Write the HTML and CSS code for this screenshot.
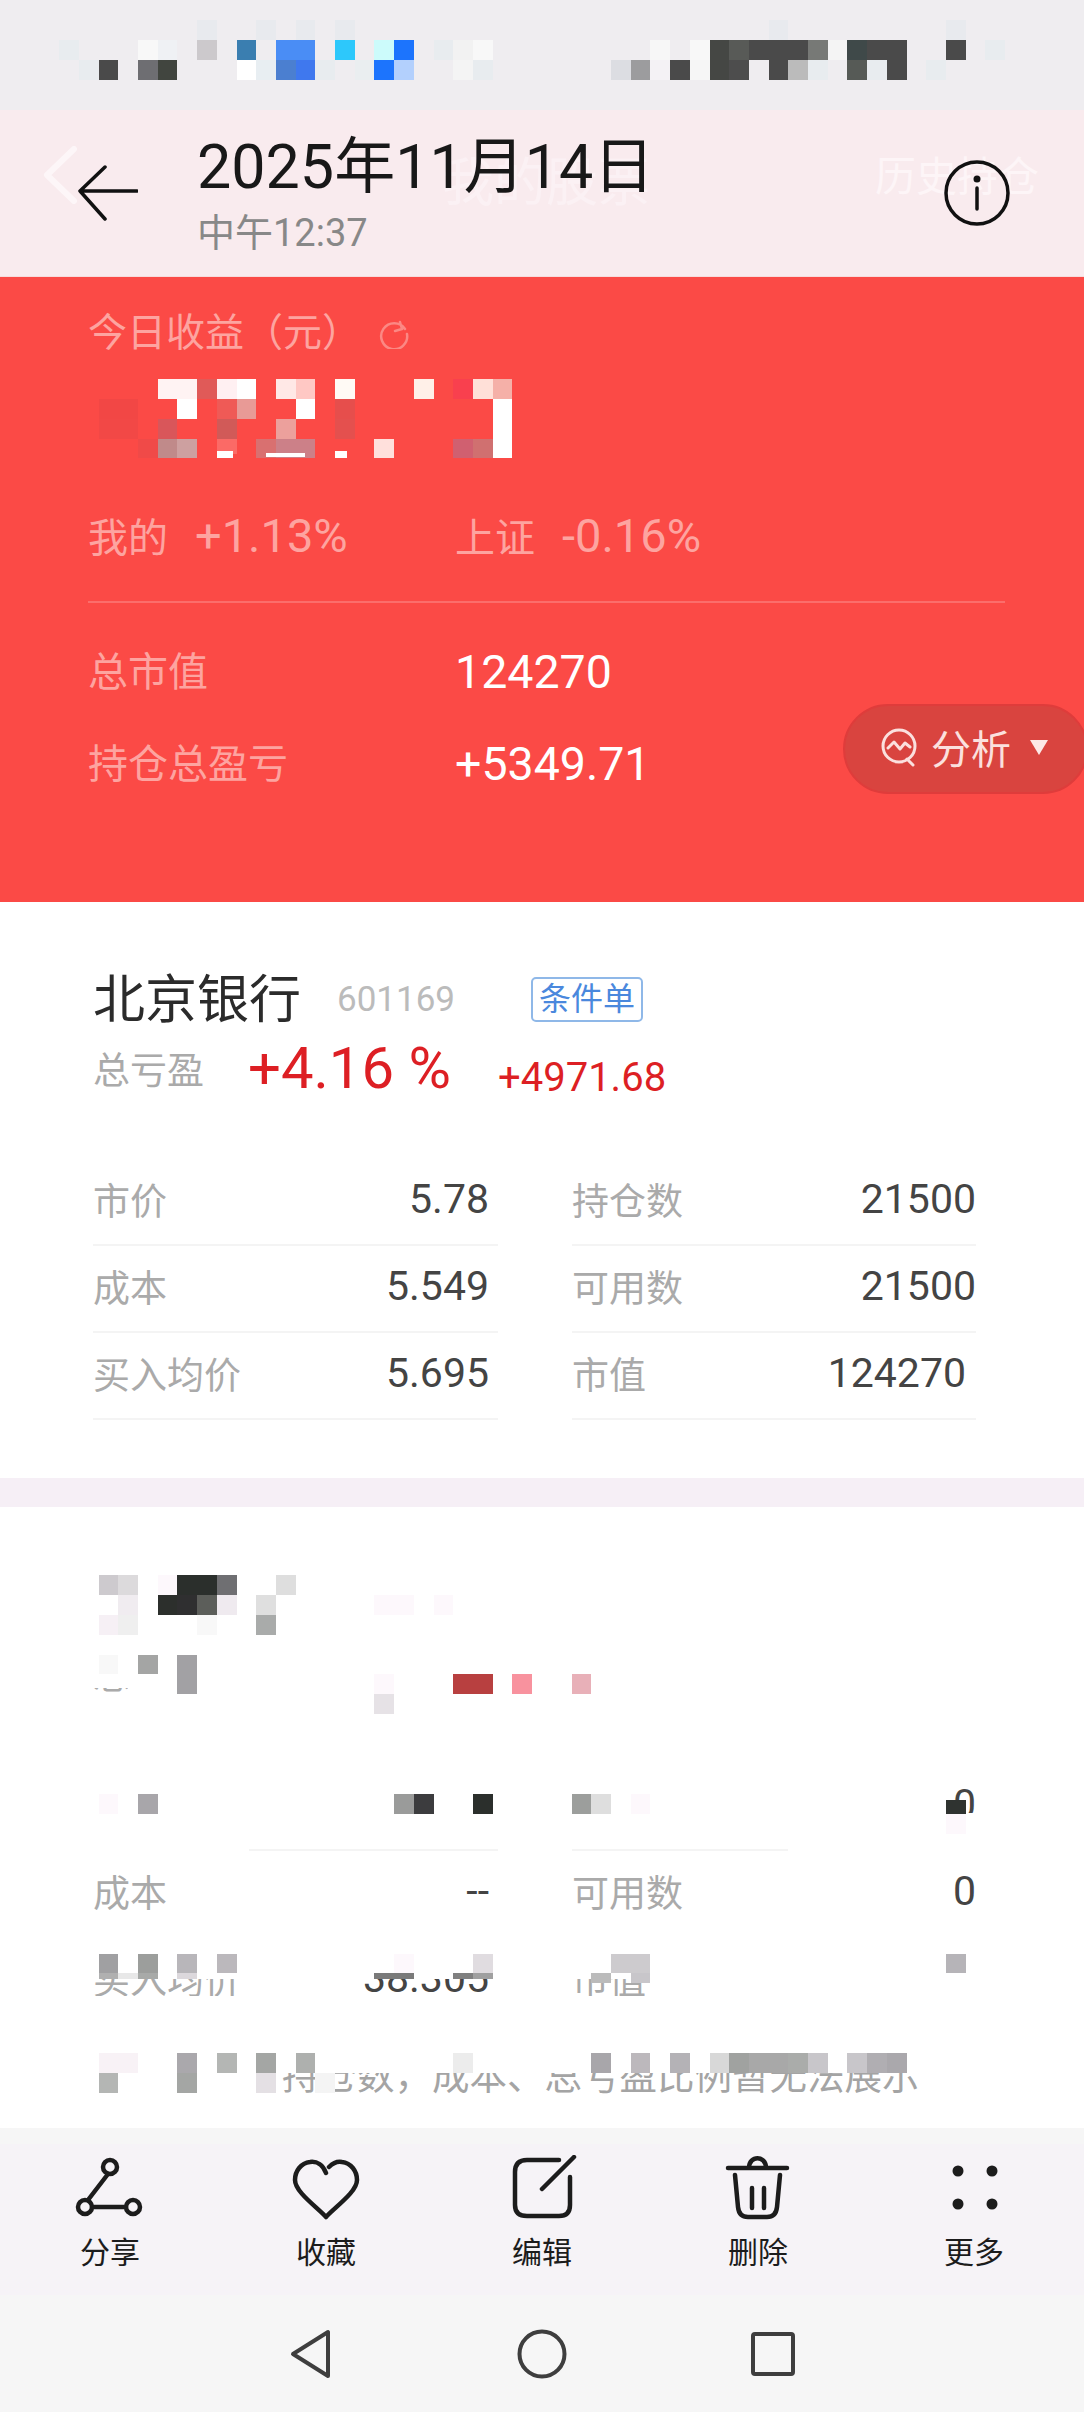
FILE: index.html
```html
<!DOCTYPE html>
<html lang="zh-CN">
<head>
    <meta charset="UTF-8">
    <meta name="viewport" content="width=device-width, initial-scale=1.0">
    <title>持仓详情</title>
    <link rel="stylesheet" href="styles.css">
</head>
<body>
    <div class="page">
        <div class="status-bar"></div>

        <header class="top-bar">
            <div class="ghost-bar">
                <svg class="ghost-back" viewBox="0 0 36 58"><path d="M32 3 L5 29 L32 55"/></svg>
                <span class="ghost-title">我的股票</span>
                <span class="ghost-link">历史持仓</span>
            </div>
            <svg class="back-arrow" viewBox="0 0 60 56"><path d="M27 2 L2 26 L27 54 M2 26 H59"/></svg>
            <div class="title-block">
                <h1>2025年11月14日</h1>
                <p>中午12:37</p>
            </div>
            <svg class="info-icon" viewBox="0 0 68 68">
                <circle cx="34" cy="34" r="31"/>
                <circle class="dot" cx="34" cy="20" r="3.5"/>
                <path d="M34 29 V50"/>
            </svg>
        </header>

        <section class="summary">
            <div class="today">
                今日收益（元）
                <svg class="refresh" viewBox="0 0 32 32"><path d="M27 12 A13 13 0 1 0 29 17 M22 5 L24 12 L17 14"/></svg>
            </div>
            <div class="compare">
                <span class="compare-item"><span class="compare-name">我的</span>+1.13%</span>
                <span class="compare-item"><span class="compare-name">上证</span>-0.16%</span>
            </div>
            <div class="summary-line"></div>
            <div class="summary-row"><span class="summary-label">总市值</span><span class="summary-value">124270</span></div>
            <div class="summary-row second"><span class="summary-label">持仓总盈亏</span><span class="summary-value">+5349.71</span></div>
            <div class="analyse">
                <svg class="analyse-icon" viewBox="0 0 42 40">
                    <circle cx="20" cy="19" r="16"/>
                    <path d="M9 21 L15 15 L21 22 L26 16 L31 20 M28 32 L34 38"/>
                </svg>
                分析
                <span class="caret"></span>
            </div>
        </section>

        <section class="stock">
            <div class="stock-head">
                <span class="stock-name">北京银行</span>
                <span class="stock-code">601169</span>
                <span class="stock-tag">条件单</span>
            </div>
            <div class="stock-profit">
                <span class="profit-label">总亏盈</span>
                <span class="profit-rate">+4.16 %</span>
                <span class="profit-sum">+4971.68</span>
            </div>
            <div class="stock-grid">
                <div class="cell"><span>市价</span><b>5.78</b></div>
                <div class="cell"><span>持仓数</span><b>21500</b></div>
                <div class="cell"><span>成本</span><b>5.549</b></div>
                <div class="cell"><span>可用数</span><b>21500</b></div>
                <div class="cell"><span>买入均价</span><b>5.695</b></div>
                <div class="cell"><span>市值</span><b class="nudge">124270</b></div>
            </div>
        </section>

        <div class="strip"></div>

        <section class="stock second-stock">
            <div class="stock-head"></div>
            <div class="stock-profit">
                <span class="profit-label">总亏盈</span>
            </div>
            <div class="stock-grid">
                <div class="cell"><span>市价</span><b>--</b></div>
                <div class="cell"><span>持仓数</span><b>0</b></div>
                <div class="cell"><span>成本</span><b>--</b></div>
                <div class="cell"><span>可用数</span><b>0</b></div>
                <div class="cell"><span>买入均价</span><b>38.305</b></div>
                <div class="cell"><span>市值</span><b></b></div>
            </div>
            <p class="stock-note">持仓数，成本、总亏盈比例暂无法展示</p>
        </section>

        <div class="tool-gap"></div>

        <nav class="toolbar">
            <div class="tool">
                <svg viewBox="0 0 70 65">
                    <circle cx="35" cy="12" r="7"/><circle cx="10" cy="52" r="7"/><circle cx="58" cy="52" r="7"/>
                    <path d="M33 19 L13 45 M17 52 H51"/>
                </svg>
                <span>分享</span>
            </div>
            <div class="tool">
                <svg viewBox="0 0 70 65"><path d="M35 18 C32 10 26 6 19 7 C10 8 4 16 4 25 C4 37 26 52 35 62 C44 52 66 37 66 25 C66 16 60 8 51 7 C46 6 42 8 38 12"/></svg>
                <span>收藏</span>
            </div>
            <div class="tool">
                <svg viewBox="0 0 70 65"><path d="M52 5 H20 Q8 5 8 17 V50 Q8 61 20 61 H52 Q63 61 63 50 V22 M67 2 L35 34"/></svg>
                <span>编辑</span>
            </div>
            <div class="tool">
                <svg viewBox="0 0 70 65"><path d="M5 13 H64 M26 13 C26 0 43 0 43 13 M12 20 L15 52 Q16 62 25 62 H44 Q53 62 54 52 L57 20 M29 33 V53 M41 33 V53"/></svg>
                <span>删除</span>
            </div>
            <div class="tool">
                <svg viewBox="0 0 70 65">
                    <circle class="dot" cx="19" cy="16" r="5.5"/><circle class="dot" cx="53" cy="16" r="5.5"/>
                    <circle class="dot" cx="19" cy="49" r="5.5"/><circle class="dot" cx="53" cy="49" r="5.5"/>
                </svg>
                <span>更多</span>
            </div>
        </nav>

        <div class="nav-bar">
            <svg viewBox="0 0 44 50"><path d="M39 3 V47 L4 25 Z"/></svg>
            <svg viewBox="0 0 50 50"><circle cx="25" cy="25" r="22.5"/></svg>
            <svg viewBox="0 0 46 46"><rect x="3" y="3" width="40" height="40" rx="2"/></svg>
        </div>

        <!-- masked areas of the screenshot, the white parts first, then the pixel blocks -->
        <svg class="censor" viewBox="0 0 1084 2412" preserveAspectRatio="none">
            <g fill="#fff">
                <rect x="0" y="1530" width="1084" height="158"/>
                <rect x="128" y="1688" width="956" height="6"/>
                <rect x="0" y="1694" width="1084" height="92"/>
                <rect x="0" y="1786" width="945" height="63"/>
                <rect x="985" y="1786" width="99" height="68"/>
                <rect x="945" y="1813" width="40" height="41"/>
                <rect x="0" y="1849" width="249" height="4"/>
                <rect x="788" y="1849" width="157" height="4"/>
                <rect x="0" y="1910" width="1084" height="69"/>
                <rect x="0" y="1996" width="1084" height="77"/>
                <rect x="0" y="2073" width="249" height="21"/>
            </g>
            <g transform="scale(19.709 19.934)">
                <!-- status bar -->
                <rect x="10" y="1" width="1" height="1" fill="#e8eaee"/><rect x="13" y="1" width="1" height="1" fill="#e8eaee"/>
                <rect x="15" y="1" width="1" height="1" fill="#e8eaee"/><rect x="17" y="1" width="1" height="1" fill="#e8eaee"/>
                <rect x="39" y="1" width="1" height="1" fill="#e8eaee"/><rect x="48" y="1" width="1" height="1" fill="#e8eaee"/>

                <rect x="3" y="2" width="1" height="1" fill="#e8ecef"/><rect x="7" y="2" width="1" height="1" fill="#f8f8f8"/>
                <rect x="8" y="2" width="1" height="1" fill="#eff1f4"/><rect x="10" y="2" width="1" height="1" fill="#ccc9cc"/>
                <rect x="12" y="2" width="1" height="1" fill="#3a7eb0"/><rect x="14" y="2" width="2" height="1" fill="#4a8df5"/>
                <rect x="17" y="2" width="1" height="1" fill="#2dc8fb"/><rect x="19" y="2" width="1" height="1" fill="#ccfbfb"/>
                <rect x="20" y="2" width="1" height="1" fill="#1c74fd"/><rect x="22" y="2" width="1" height="1" fill="#e8ecef"/>
                <rect x="23" y="2" width="1" height="1" fill="#f2f2f2"/><rect x="24" y="2" width="1" height="1" fill="#f8f8f8"/>
                <rect x="33" y="2" width="1" height="1" fill="#f7f7f7"/><rect x="35" y="2" width="1" height="1" fill="#f8f8f8"/>
                <rect x="36" y="2" width="1" height="1" fill="#454744"/><rect x="37" y="2" width="1" height="1" fill="#585a57"/>
                <rect x="38" y="2" width="3" height="1" fill="#4a4a4a"/><rect x="41" y="2" width="1" height="1" fill="#777976"/>
                <rect x="42" y="2" width="1" height="1" fill="#f4f4f4"/><rect x="43" y="2" width="1" height="1" fill="#3f4949"/>
                <rect x="44" y="2" width="2" height="1" fill="#4a4a4a"/><rect x="48" y="2" width="1" height="1" fill="#4a4a4a"/>
                <rect x="50" y="2" width="1" height="1" fill="#e8ecef"/>

                <rect x="4" y="3" width="1" height="1" fill="#e8ecef"/><rect x="5" y="3" width="1" height="1" fill="#4a4a4a"/>
                <rect x="7" y="3" width="1" height="1" fill="#6e6e72"/><rect x="8" y="3" width="1" height="1" fill="#41453f"/>
                <rect x="12" y="3" width="1" height="1" fill="#fff"/><rect x="13" y="3" width="1" height="1" fill="#e8eef2"/>
                <rect x="14" y="3" width="1" height="1" fill="#4b7fd0"/><rect x="15" y="3" width="1" height="1" fill="#3f78ee"/>
                <rect x="16" y="3" width="1" height="1" fill="#e8ecef"/><rect x="18" y="3" width="1" height="1" fill="#eaeef0"/>
                <rect x="19" y="3" width="1" height="1" fill="#1c74fd"/><rect x="20" y="3" width="1" height="1" fill="#b3d0fd"/>
                <rect x="23" y="3" width="1" height="1" fill="#f4f4f4"/><rect x="24" y="3" width="1" height="1" fill="#e8ecef"/>
                <rect x="31" y="3" width="1" height="1" fill="#dcdde2"/><rect x="32" y="3" width="1" height="1" fill="#9c9c9e"/>
                <rect x="33" y="3" width="1" height="1" fill="#f4f2f5"/><rect x="34" y="3" width="1" height="1" fill="#4a4a4a"/>
                <rect x="35" y="3" width="1" height="1" fill="#f6f6f6"/><rect x="36" y="3" width="1" height="1" fill="#454744"/>
                <rect x="37" y="3" width="1" height="1" fill="#4d4d4d"/><rect x="39" y="3" width="1" height="1" fill="#4a4a4a"/>
                <rect x="40" y="3" width="1" height="1" fill="#bbbbbb"/><rect x="41" y="3" width="1" height="1" fill="#e8ecef"/>
                <rect x="43" y="3" width="1" height="1" fill="#565a56"/><rect x="44" y="3" width="1" height="1" fill="#e8ecef"/>
                <rect x="45" y="3" width="1" height="1" fill="#4a4a4a"/><rect x="47" y="3" width="1" height="1" fill="#e8ecef"/>

                <!-- today's profit number -->
                <rect x="8" y="19" width="2" height="1" fill="#fff3f3"/><rect x="10" y="19" width="1" height="1" fill="#e05a58"/>
                <rect x="11" y="19" width="1" height="1" fill="#fff0f2"/><rect x="12" y="19" width="1" height="1" fill="#fff"/>
                <rect x="14" y="19" width="1" height="1" fill="#ffe8e6"/><rect x="15" y="19" width="1" height="1" fill="#ffc8c4"/>
                <rect x="17" y="19" width="1" height="1" fill="#fffaf5"/><rect x="21" y="19" width="1" height="1" fill="#fff0e8"/>
                <rect x="23" y="19" width="1" height="1" fill="#f9404e"/><rect x="24" y="19" width="1" height="1" fill="#ffe0d8"/>
                <rect x="25" y="19" width="1" height="1" fill="#f5b0a8"/>

                <rect x="5" y="20" width="2" height="1" fill="#f24745"/><rect x="9" y="20" width="1" height="1" fill="#fff"/>
                <rect x="11" y="20" width="1" height="1" fill="#ef5a56"/><rect x="12" y="20" width="1" height="1" fill="#e89a96"/>
                <rect x="15" y="20" width="1" height="1" fill="#fff"/><rect x="17" y="20" width="1" height="1" fill="#e64e4c"/>
                <rect x="25" y="20" width="1" height="1" fill="#fff"/>

                <rect x="5" y="21" width="2" height="1" fill="#f24846"/><rect x="8" y="21" width="1" height="1" fill="#d9565a"/>
                <rect x="11" y="21" width="1" height="1" fill="#d15a58"/><rect x="14" y="21" width="1" height="1" fill="#eca09c"/>
                <rect x="17" y="21" width="1" height="1" fill="#e4504e"/><rect x="25" y="21" width="1" height="1" fill="#fff"/>

                <rect x="7" y="22" width="1" height="1" fill="#f04a48"/><rect x="8" y="22" width="1" height="1" fill="#c08a8a"/>
                <rect x="9" y="22" width="1" height="1" fill="#cda0a0"/><rect x="11" y="22" width="1" height=".8" fill="#fb6a66"/>
                <rect x="11" y="22.6" width=".8" height=".4" fill="#fff"/>
                <rect x="13" y="22" width="1" height="1" fill="#d97070"/><rect x="14" y="22" width="2" height="1" fill="#cc8088"/>
                <rect x="13.5" y="22.7" width="2" height=".25" fill="#fff"/>
                <rect x="17" y="22.6" width=".6" height=".4" fill="#fff"/><rect x="19" y="22" width="1" height="1" fill="#ffe0dc"/>
                <rect x="23" y="22" width="1" height="1" fill="#d06070"/><rect x="24" y="22" width="1" height="1" fill="#d07070"/>
                <rect x="25" y="22" width="1" height="1" fill="#fff"/>

                <!-- second stock name -->
                <rect x="5" y="79" width="1" height="1" fill="#cdcace"/><rect x="6" y="79" width="1" height="1" fill="#dcdadc"/>
                <rect x="8" y="79" width="1" height="1" fill="#fdf8fc"/><rect x="9" y="79" width="2" height="1" fill="#2b2f2c"/>
                <rect x="11" y="79" width="1" height="1" fill="#6f6f72"/><rect x="14" y="79" width="1" height="1" fill="#dedede"/>

                <rect x="6" y="80" width="1" height="1" fill="#f0ecf0"/><rect x="8" y="80" width="1" height="1" fill="#2c2f2c"/>
                <rect x="9" y="80" width="1" height="1" fill="#2f2f30"/><rect x="10" y="80" width="1" height="1" fill="#5c5e5a"/>
                <rect x="11" y="80" width="1" height="1" fill="#efeaef"/><rect x="13" y="80" width="1" height="1" fill="#dfdfdf"/>
                <rect x="19" y="80" width="2" height="1" fill="#fdf8fc"/><rect x="22" y="80" width="1" height="1" fill="#fdf8fc"/>

                <rect x="5" y="81" width="1" height="1" fill="#f6f0f5"/><rect x="6" y="81" width="1" height="1" fill="#efefef"/>
                <rect x="10" y="81" width="1" height="1" fill="#f8f8f8"/><rect x="13" y="81" width="1" height="1" fill="#a9abaa"/>

                <!-- second stock profit -->
                <rect x="5" y="83" width="1" height="1" fill="#f8f8f8"/><rect x="7" y="83" width="1" height="1" fill="#a4a5a4"/>
                <rect x="9" y="83" width="1" height="2" fill="#a2a1a4"/>
                <rect x="19" y="84" width="1" height="1" fill="#fdf8fc"/><rect x="23" y="84" width="2" height="1" fill="#b84040"/>
                <rect x="26" y="84" width="1" height="1" fill="#f8929e"/><rect x="29" y="84" width="1" height="1" fill="#e8b0b8"/>
                <rect x="19" y="85" width="1" height="1" fill="#e6e2e6"/>

                <!-- first row -->
                <rect x="5" y="90" width="1" height="1" fill="#fdf8fc"/><rect x="7" y="90" width="1" height="1" fill="#a8a6aa"/>
                <rect x="20" y="90" width="1" height="1" fill="#9a9b9a"/><rect x="21" y="90" width="1" height="1" fill="#3c3c3e"/>
                <rect x="24" y="90" width="1" height="1" fill="#2b2f2c"/><rect x="29" y="90" width="1" height="1" fill="#9c9e9c"/>
                <rect x="30" y="90" width="1" height="1" fill="#dedede"/><rect x="32" y="90" width="1" height="1" fill="#fdf8fc"/>
                <rect x="48" y="90.3" width="1" height=".7" fill="#2f3330"/><rect x="48" y="91" width="1" height="1" fill="#fdf8fc"/>

                <!-- third row -->
                <rect x="5" y="98" width="1" height="1" fill="#a0a0a2"/><rect x="7" y="98" width="1" height="1" fill="#9c9e9c"/>
                <rect x="9" y="98" width="1" height="1" fill="#b8b6ba"/><rect x="11" y="98" width="1" height="1" fill="#bbb8bc"/>
                <rect x="20" y="98" width="1" height="1" fill="#fdf8fc"/><rect x="24" y="98" width="1" height="1" fill="#e0dce0"/>
                <rect x="31" y="98" width="2" height="1" fill="#cdcbce"/><rect x="48" y="98" width="1" height="1" fill="#b6b4b8"/>

                <rect x="5" y="99" width="1" height=".3" fill="#b0b0b0"/><rect x="6" y="99" width="1" height=".3" fill="#e8e8e8"/>
                <rect x="7" y="99" width="1" height=".3" fill="#a8aaa8"/><rect x="9" y="99" width="1" height=".3" fill="#dcd8dc"/>
                <rect x="19" y="99" width="2" height=".3" fill="#7a7a7a"/><rect x="23" y="99" width="1" height=".3" fill="#808080"/>
                <rect x="24" y="99" width="1" height=".3" fill="#a0a0a0"/><rect x="30" y="99" width="1" height=".5" fill="#bbbbbb"/>
                <rect x="32" y="99" width="1" height=".5" fill="#c8c6ca"/>

                <!-- note line -->
                <rect x="5" y="103" width="2" height="1" fill="#f8f2f6"/><rect x="9" y="103" width="1" height="1" fill="#aaa8ac"/>
                <rect x="11" y="103" width="1" height="1" fill="#b4b6b4"/><rect x="13" y="103" width="1" height="1" fill="#a4a6a4"/>
                <rect x="15" y="103" width="1" height="1" fill="#aeb0ae"/><rect x="23" y="103" width="1" height="1" fill="#ececec"/>
                <rect x="30" y="103" width="1" height="1" fill="#a8a6aa"/><rect x="32" y="103" width="1" height="1" fill="#bcb8bc"/>
                <rect x="34" y="103" width="1" height="1" fill="#b4b2b6"/><rect x="36" y="103" width="1" height="1" fill="#d8d8d8"/>
                <rect x="37" y="103" width="1" height="1" fill="#a0a2a0"/><rect x="38" y="103" width="2" height="1" fill="#a8a8a8"/>
                <rect x="40" y="103" width="1" height="1" fill="#aaacaa"/><rect x="41" y="103" width="1" height="1" fill="#c8c6ca"/>
                <rect x="43" y="103" width="1" height="1" fill="#c8c6ca"/><rect x="44" y="103" width="1" height="1" fill="#b0aeb2"/>
                <rect x="45" y="103" width="1" height="1" fill="#aaa8ac"/>
                <rect x="5" y="104" width="1" height="1" fill="#b4b6b4"/><rect x="9" y="104" width="1" height="1" fill="#a4a6a4"/>
                <rect x="13" y="104" width="1" height="1" fill="#e4e0e4"/><rect x="16" y="104" width="1" height="1" fill="#f4f4f4"/>
            </g>
        </svg>
    </div>
</body>
</html>
```
FILE: styles.css
```css
* {
    box-sizing: border-box;
}

body {
    margin: 0;
    font-family: Roboto, "Noto Sans CJK SC", sans-serif;
    color: #222;
    background: #fff;
}

.page {
    position: relative;
    width: 1084px;
    height: 2412px;
    overflow: hidden;
}

svg {
    display: block;
    fill: none;
    stroke: currentColor;
    stroke-linecap: round;
    stroke-linejoin: round;
}

svg .dot {
    fill: currentColor;
    stroke: none;
}

.status-bar {
    height: 110px;
    background: #efedf0;
}

/* header */
.top-bar {
    position: relative;
    display: flex;
    align-items: center;
    height: 167px;
    padding: 0 73px 0 78px;
    background: #f9ebee;
    border-bottom: 1px solid #f7dcdc;
}

.ghost-bar {
    position: absolute;
    inset: 0;
    color: #fbf1f4;
}

.ghost-back {
    position: absolute;
    left: 42px;
    top: 36px;
    width: 36px;
    height: 58px;
    stroke-width: 6;
    color: #fdf6f8;
}

.ghost-title {
    position: absolute;
    left: 442px;
    top: 43px;
    font-size: 52px;
    line-height: 62px;
}

.ghost-link {
    position: absolute;
    left: 875px;
    top: 42px;
    font-size: 41px;
    line-height: 50px;
    color: #fdf5f7;
}

.back-arrow {
    position: relative;
    width: 60px;
    height: 56px;
    stroke-width: 3.5;
    color: #111;
}

.title-block {
    position: relative;
    margin-left: 59px;
    padding-top: 5px;
}

.title-block h1 {
    margin: 0 0 13px;
    font-size: 61px;
    line-height: 62px;
    font-weight: 400;
    color: #181818;
}

.title-block p {
    margin: 0;
    font-size: 38px;
    line-height: 44px;
    color: #888;
}

.info-icon {
    position: relative;
    margin-left: auto;
    width: 68px;
    height: 68px;
    stroke-width: 3.5;
    color: #111;
}

/* red summary */
.summary {
    position: relative;
    height: 625px;
    padding: 34px 79px 0 88px;
    background: #fb4a46;
    color: #fda4a0;
}

.today {
    display: flex;
    align-items: center;
    gap: 17px;
    font-size: 39px;
    line-height: 44px;
}

.refresh {
    width: 32px;
    height: 32px;
    stroke-width: 2.5;
    color: #fb8884;
}

.compare {
    display: flex;
    margin-top: 158px;
    font-size: 47px;
    line-height: 46px;
}

.compare-item {
    width: 367px;
}

.compare-name {
    margin-right: 27px;
    font-size: 40px;
}

.summary-line {
    height: 2px;
    margin-top: 39px;
    background: rgba(255, 255, 255, 0.2);
}

.summary-row {
    display: flex;
    align-items: center;
    height: 50px;
    margin-top: 44px;
}

.summary-row.second {
    margin-top: 42px;
}

.summary-label {
    width: 367px;
    padding-bottom: 6px;
    font-size: 40px;
}

.summary-value {
    font-size: 46.5px;
    color: #fff;
}

.analyse {
    position: absolute;
    right: -4px;
    top: 427px;
    display: flex;
    align-items: center;
    width: 245px;
    height: 90px;
    padding: 0 0 4px 34px;
    border: 2px solid #df3c3b;
    border-radius: 45px;
    background: #d9443f;
    color: #fbe0de;
    font-size: 40px;
}

.analyse-icon {
    width: 42px;
    height: 40px;
    margin-right: 10px;
    stroke-width: 3;
}

.caret {
    width: 0;
    height: 0;
    margin-left: 19px;
    border-left: 9px solid transparent;
    border-right: 9px solid transparent;
    border-top: 15px solid #fde8e6;
}

/* stock cards */
.stock {
    height: 576px;
    padding: 67px 109px 0 93px;
    background: #fff;
}

.second-stock {
    height: 621px;
}

.stock-head {
    display: flex;
    align-items: center;
    height: 60px;
}

.stock-name {
    margin-bottom: 7px;
    font-size: 52px;
    color: #2b2b2b;
}

.stock-code {
    margin-left: 36px;
    font-size: 35px;
    color: #bbb;
}

.stock-tag {
    margin-left: 76px;
    width: 112px;
    height: 45px;
    border: 2px solid #8fb8e8;
    border-radius: 5px;
    color: #4a88dd;
    font-size: 32px;
    line-height: 40px;
    text-align: center;
}

.stock-profit {
    display: flex;
    align-items: flex-start;
    height: 70px;
    margin-top: 6px;
}

.profit-label {
    width: 155px;
    font-size: 37px;
    line-height: 74px;
    color: #aaa;
}

.profit-rate {
    width: 250px;
    font-size: 58px;
    line-height: 66px;
    color: #dd1f24;
}

.profit-sum {
    font-size: 40px;
    line-height: 86px;
    color: #dd1f24;
}

.stock-grid {
    display: grid;
    grid-template-columns: 405px 404px;
    column-gap: 74px;
    grid-auto-rows: 87px;
    margin-top: 54px;
}

.cell {
    display: flex;
    justify-content: space-between;
    align-items: center;
    padding: 0 9px 6px 0;
    border-bottom: 2px solid #f4f4f4;
    font-size: 37px;
    color: #aaa;
}

.cell:nth-child(even) {
    padding-right: 0;
}

.cell b {
    font-size: 41px;
    font-weight: 400;
    color: #444;
}

.cell b.nudge {
    margin-right: 10px;
}

.stock-note {
    margin: 0 0 0 189px;
    padding-top: 29px;
    font-size: 37.5px;
    line-height: 44px;
    color: #a4a4a4;
    white-space: nowrap;
}

.strip {
    height: 29px;
    background: #f6eff6;
}

/* bottom */
.tool-gap {
    height: 16px;
    background: #f6f6f6;
}

.toolbar {
    display: grid;
    grid-template-columns: repeat(5, 216px);
    height: 151px;
    padding: 11px 0 0 2px;
    background: #f6f3f7;
}

.tool {
    display: flex;
    flex-direction: column;
    align-items: center;
    gap: 18px;
    font-size: 30px;
    line-height: 30px;
    color: #1c1c1c;
}

.tool svg {
    width: 70px;
    height: 65px;
    stroke-width: 4.5;
}

.nav-bar {
    display: grid;
    grid-template-columns: repeat(3, 231px);
    justify-content: center;
    justify-items: center;
    align-items: center;
    height: 117px;
    background: #f6f6f6;
    color: #3e3e3e;
}

.nav-bar svg {
    stroke-width: 4;
}

.nav-bar svg:nth-child(1) {
    width: 44px;
    height: 50px;
}

.nav-bar svg:nth-child(2) {
    width: 50px;
    height: 50px;
}

.nav-bar svg:nth-child(3) {
    width: 46px;
    height: 46px;
}

.censor {
    position: absolute;
    left: 0;
    top: 0;
    width: 1084px;
    height: 2412px;
    stroke: none;
    pointer-events: none;
    shape-rendering: crispEdges;
}
```
